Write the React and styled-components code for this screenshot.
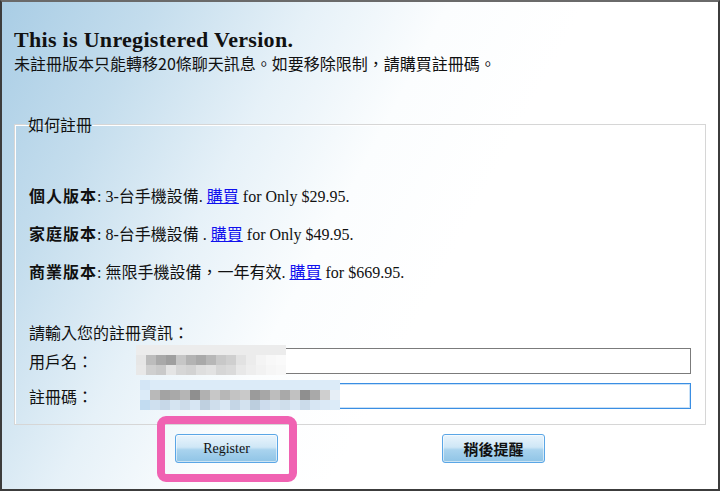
import styled, { createGlobalStyle } from "styled-components"

const GlobalStyle = createGlobalStyle`
  html, body {
    margin: 0;
    padding: 0;
    background: #fff;
  }
  * {
    box-sizing: border-box;
  }
`

const serif = `"Liberation Serif", "Noto Sans CJK TC", serif`
const sans = `"Noto Sans CJK TC", "Noto Sans", sans-serif`

// pixelated blocks that hide the user's data
const nameBlur = [
  ["#ececec", "#ececec", "#ececec", "#ececec", "#ececec", "#ececec", "#ececec", "#ececec", "#ececec", "#ececec", "#ececec", "#ececec", "#ececec", "#ececec", "#ececec"],
  ["#e6e6e6", "#bcbcbc", "#a9a9a9", "#9f9f9f", "#c6c6c6", "#b3b3b3", "#a9a9a9", "#b7b7b7", "#c8c8c8", "#cfcfcf", "#e2e2e2", "#ececec", "#f4f4f4", "#f8f8f8", "#fafafa"],
  ["#e8e8e8", "#cfcfcf", "#c9c9c9", "#e4e4e4", "#d6d6d6", "#d2d2d2", "#dedede", "#e2e2e2", "#d6d6d6", "#dadada", "#e8e8e8", "#eeeeee", "#f2f2f2", "#f6f6f6", "#f8f8f8"],
]

const codeBlur = [
  ["#d4e6f6", "#dcebf8", "#dcebf8", "#dcebf8", "#dcebf8", "#dcebf8", "#dcebf8", "#dcebf8", "#dcebf8", "#dcebf8", "#dcebf8", "#dcebf8", "#dcebf8", "#dcebf8", "#dcebf8", "#dcebf8", "#dcebf8", "#dcebf8", "#dcebf8", "#dcebf8"],
  ["#dcebf8", "#b9b9b9", "#a3a3a3", "#a9a9a9", "#b5b5b5", "#8f8f8f", "#b1b1b1", "#c7c7c7", "#b7b7b7", "#c3c3c3", "#c9c9c9", "#9b9b9b", "#a7a7a7", "#bdbdbd", "#a9a9a9", "#c1c1c1", "#8f8f8f", "#a9a9a9", "#cfcfcf", "#e6eef6"],
  ["#c2dcf1", "#cfe0ef", "#c7d8e8", "#d5e4f1", "#cddcea", "#d7e6f3", "#bfd0e0", "#cfdeec", "#d9e7f3", "#c5d6e6", "#d3e2ef", "#bccede", "#cddced", "#d5e3f0", "#cfdeeb", "#d9e7f4", "#cbdbea", "#d7e6f3", "#dbe9f6", "#dcebf8"],
]

const plans = [
  { name: "個人版本", desc: "3-台手機設備. ", price: " for Only $29.95." },
  { name: "家庭版本", desc: "8-台手機設備 . ", price: " for Only $49.95." },
  { name: "商業版本", desc: "無限手機設備，一年有效. ", price: " for $669.95." },
]

const Mosaic = ({ rows, $left, $top }) => (
  <Blur $left={$left} $top={$top} $cols={rows[0].length}>
    {rows.flat().map((c, i) => (
      <Cell key={i} $shade={c} />
    ))}
  </Blur>
)

const App = () => {
  return (
    <>
      <GlobalStyle />
      <Window>
        <Header>
          <Title>This is Unregistered Version.</Title>
          <Notice>未註冊版本只能轉移20條聊天訊息。如要移除限制，請購買註冊碼。</Notice>
        </Header>

        <Group>
          <Legend>如何註冊</Legend>

          <Plans>
            {plans.map((p) => (
              <Plan key={p.name}>
                <b>{p.name}</b>: {p.desc}
                <BuyLink href="#">購買</BuyLink>
                {p.price}
              </Plan>
            ))}
          </Plans>

          <Prompt>請輸入您的註冊資訊：</Prompt>
          <Form>
            <Label>用戶名：</Label>
            <Field>
              <Input $focused={false} />
              <Mosaic rows={nameBlur} $left={-4} $top={-3} />
            </Field>
            <Label>註冊碼：</Label>
            <Field>
              <Input $focused />
              <Mosaic rows={codeBlur} $left={0} $top={-3} />
            </Field>
          </Form>
        </Group>

        <Actions>
          <Marked>
            <Button $latin>Register</Button>
            <Highlight />
          </Marked>
          <Button>稍後提醒</Button>
        </Actions>
      </Window>
    </>
  )
}

export default App

const Window = styled.div`
  width: 720px;
  height: 491px;
  border: 2px solid #3c3c3c;
  border-top-color: #6a6a6a;
  padding: 0 12px;
  background:
    linear-gradient(118deg, #a9cde5 0%, #c4dded 16%, #e6f1f8 32%, #fbfdfe 46%, #ffffff 60%);
  overflow: hidden;
`

const Header = styled.div`
  padding-top: 25px;
`

const Title = styled.div`
  font-family: ${serif};
  font-weight: bold;
  font-size: 22px;
  line-height: 26px;
  letter-spacing: 0.3px;
  color: #111;
`

const Notice = styled.div`
  font-family: ${sans};
  font-size: 16px;
  line-height: 20px;
  color: #111;
`

const Group = styled.fieldset`
  margin: 42px 0 0;
  padding: 0 14px 15px 14px;
  border: 1px solid #d6d6d6;
  box-shadow: inset 1px 1px 0 #fff;
  min-width: 0;
`

const Legend = styled.legend`
  font-family: ${sans};
  font-size: 16px;
  line-height: 18px;
  padding: 0 2px;
  margin-left: -3px;
  color: #111;
`

const Plans = styled.div`
  margin-top: 44px;
`

const Plan = styled.div`
  font-family: ${serif};
  font-size: 16px;
  line-height: 36px;
  color: #111;
  b {
    font-family: ${sans};
    font-weight: bold;
    letter-spacing: 1px;
  }
`

const BuyLink = styled.a`
  color: #1010ee;
  text-decoration: underline;
`

const Prompt = styled.div`
  font-family: ${sans};
  font-size: 16px;
  line-height: 20px;
  margin-top: 31px;
  color: #111;
`

const Form = styled.div`
  display: grid;
  grid-template-columns: 111px 1fr;
  row-gap: 9px;
  align-items: center;
  margin-top: 6px;
`

const Label = styled.div`
  font-family: ${sans};
  font-size: 16px;
  line-height: 20px;
  color: #111;
`

const Field = styled.div`
  position: relative;
  height: 26px;
`

const Input = styled.div`
  height: 26px;
  background: #fff;
  border: 1px solid ${(p) => (p.$focused ? "#3a8ee3" : "#7b7b7b")};
  box-shadow: ${(p) => (p.$focused ? "inset 0 0 0 1px #c9e1f7" : "none")};
`

const Blur = styled.div`
  position: absolute;
  left: ${(p) => p.$left}px;
  top: ${(p) => p.$top}px;
  display: grid;
  grid-template-columns: repeat(${(p) => p.$cols}, 10px);
  grid-auto-rows: 10px;
`

const Cell = styled.div`
  background: ${(p) => p.$shade};
`

const Actions = styled.div`
  display: flex;
  align-items: center;
  gap: 164px;
  padding: 9px 0 0 161px;
`

const Marked = styled.div`
  position: relative;
`

const Highlight = styled.div`
  position: absolute;
  top: -18px;
  left: -18px;
  right: -19px;
  bottom: -19px;
  border: 8px solid #f062b2;
  border-radius: 9px;
  pointer-events: none;
`

const Button = styled.button`
  width: 103px;
  height: 29px;
  padding: 0;
  border: 1px solid #5aa6e6;
  border-radius: 3px;
  background: linear-gradient(to bottom, #e9f4fc 0%, #cfe7f6 45%, #a9d3ee 55%, #8fc4e6 100%);
  box-shadow: inset 0 0 0 1px rgba(255, 255, 255, 0.55);
  color: #111;
  font-family: ${(p) => (p.$latin ? serif : sans)};
  font-size: ${(p) => (p.$latin ? "14px" : "15px")};
  font-weight: ${(p) => (p.$latin ? "normal" : "bold")};
  cursor: pointer;
`
